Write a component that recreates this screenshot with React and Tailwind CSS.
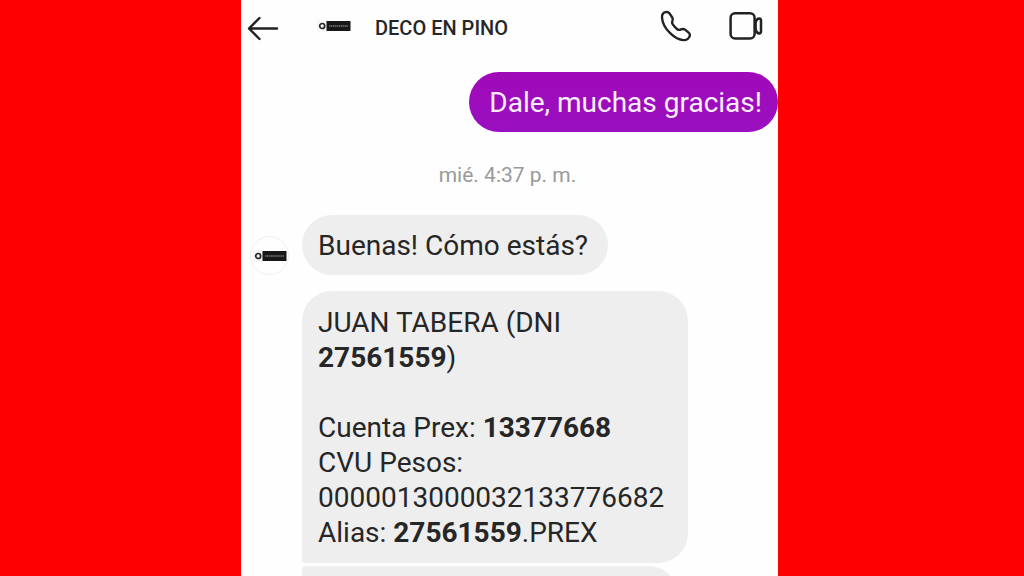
function BrandMark({ className }) {
  return (
    <svg viewBox="0 0 34 12" className={className} aria-hidden="true">
      <rect x="0" y="0" width="11" height="12" fill="#f6f6f6" />
      <circle cx="5.2" cy="6" r="2.5" fill="none" stroke="#262626" strokeWidth="1.7" />
      <rect x="9.5" y="1" width="24" height="10" fill="#171717" />
      <path d="M12 6h19" stroke="#999" strokeWidth="1.2" strokeDasharray="1.6 0.4" />
    </svg>
  );
}

function BackIcon() {
  return (
    <svg viewBox="0 0 32 26" className="h-[26px] w-8" fill="none" stroke="#222" strokeWidth="2.4" strokeLinecap="round" strokeLinejoin="round" aria-hidden="true">
      <path d="M30 13.5H2M12.5 3 2 13.5l10.5 10.5" />
    </svg>
  );
}

function PhoneIcon() {
  return (
    <svg viewBox="0 0 34 34" className="size-[34px]" fill="none" stroke="#222" strokeWidth="2.4" strokeLinejoin="round" aria-hidden="true">
      <path d="M6.4 3.2C4.2 3.8 2.9 5.8 3 8.5C3.3 13.8 7 20.3 11.4 24.4C15.4 28.2 20.4 30.9 24.4 31.1C27.5 31.3 30.2 29.2 30.8 26.8C31.1 25.6 30.8 24.6 29.9 23.8L26.4 20.9C24.9 19.8 23.4 19.7 22 20.4C20.5 21.2 19.3 21.1 18 20C16.2 18.5 14.8 16.9 13.6 15.1C12.9 14 12.9 13.2 13.4 12.1C14 10.8 13.9 9.6 13.1 8.2L10.5 4.4C9.5 3 8 2.7 6.4 3.2Z" />
    </svg>
  );
}

function VideoIcon() {
  return (
    <svg viewBox="0 0 34 30" className="h-[30px] w-[34px]" fill="none" stroke="#222" strokeWidth="2.5" strokeLinejoin="round" aria-hidden="true">
      <rect x="1.6" y="2.3" width="24" height="25.2" rx="4.5" />
      <path d="M26.6 11.4C27.2 9 28.6 7.4 30.2 7.4C31.5 7.4 32 8.2 32 9.6V20.2C32 21.6 31.5 22.4 30.2 22.4C28.6 22.4 27.2 20.8 26.6 18.4Z" />
    </svg>
  );
}

function Received({ className, children }) {
  return (
    <div className={`max-w-[386px] bg-[#eeeeee] text-[28px] leading-[35px] text-[#262626] ${className}`}>
      {children}
    </div>
  );
}

export default function App() {
  return (
    <div className="grid h-screen grid-cols-[241fr_537fr_246fr] overflow-hidden bg-[#ff0000] font-['Roboto',sans-serif]">
      <main className="col-start-2 flex min-w-0 flex-col overflow-hidden bg-[#fefefe]">
        <header className="flex h-14 shrink-0 items-center pr-[15px] pl-1.5 text-[#262626]">
          <button type="button" aria-label="Volver"><BackIcon /></button>
          <BrandMark className="mb-1 ml-[38px] h-3 w-[34px]" />
          <h1 className="ml-6 text-[20px] leading-6 font-medium">DECO EN PINO</h1>
          <div className="mb-1 ml-auto flex items-center gap-9">
            <button type="button" aria-label="Llamar"><PhoneIcon /></button>
            <button type="button" aria-label="Videollamada"><VideoIcon /></button>
          </div>
        </header>

        <section className="flex flex-col pt-4">
          <p className="self-end rounded-[30px] bg-linear-to-b from-[#a009b8] to-[#990fc0] pt-[13px] pr-4 pb-3 pl-5 text-[28px] leading-[35px] text-[#fbeefd]">
            Dale, muchas gracias!
          </p>
          <time className="mt-[31px] mr-1 self-center text-[21px] leading-6 text-[#999999]">mié. 4:37 p. m.</time>

          <div className="mt-7 flex items-end gap-[13px] pl-[9px]">
            <div className="flex size-[39px] shrink-0 items-center justify-center rounded-full border border-[#f0f0f0]">
              <BrandMark className="h-3 w-[34px]" />
            </div>
            <Received className="rounded-[30px] pt-[13px] pr-5 pb-3 pl-4">Buenas! Cómo estás?</Received>
          </div>

          <div className="mt-4 flex flex-col items-start gap-[3px] pl-[61px]">
            <Received className="rounded-[30px] rounded-bl-sm px-4 pt-[14px] pb-[13px]">
              JUAN TABERA (DNI <strong>27561559</strong>)
              <br />
              <br />
              Cuenta Prex: <strong>13377668</strong>
              <br />
              CVU Pesos:
              <br />
              0000013000032133776682
              <br />
              Alias: <strong>27561559</strong>.PREX
            </Received>
            <Received className="h-[60px] w-[376px] rounded-[30px] rounded-tl-sm" />
          </div>
        </section>
      </main>
    </div>
  );
}
